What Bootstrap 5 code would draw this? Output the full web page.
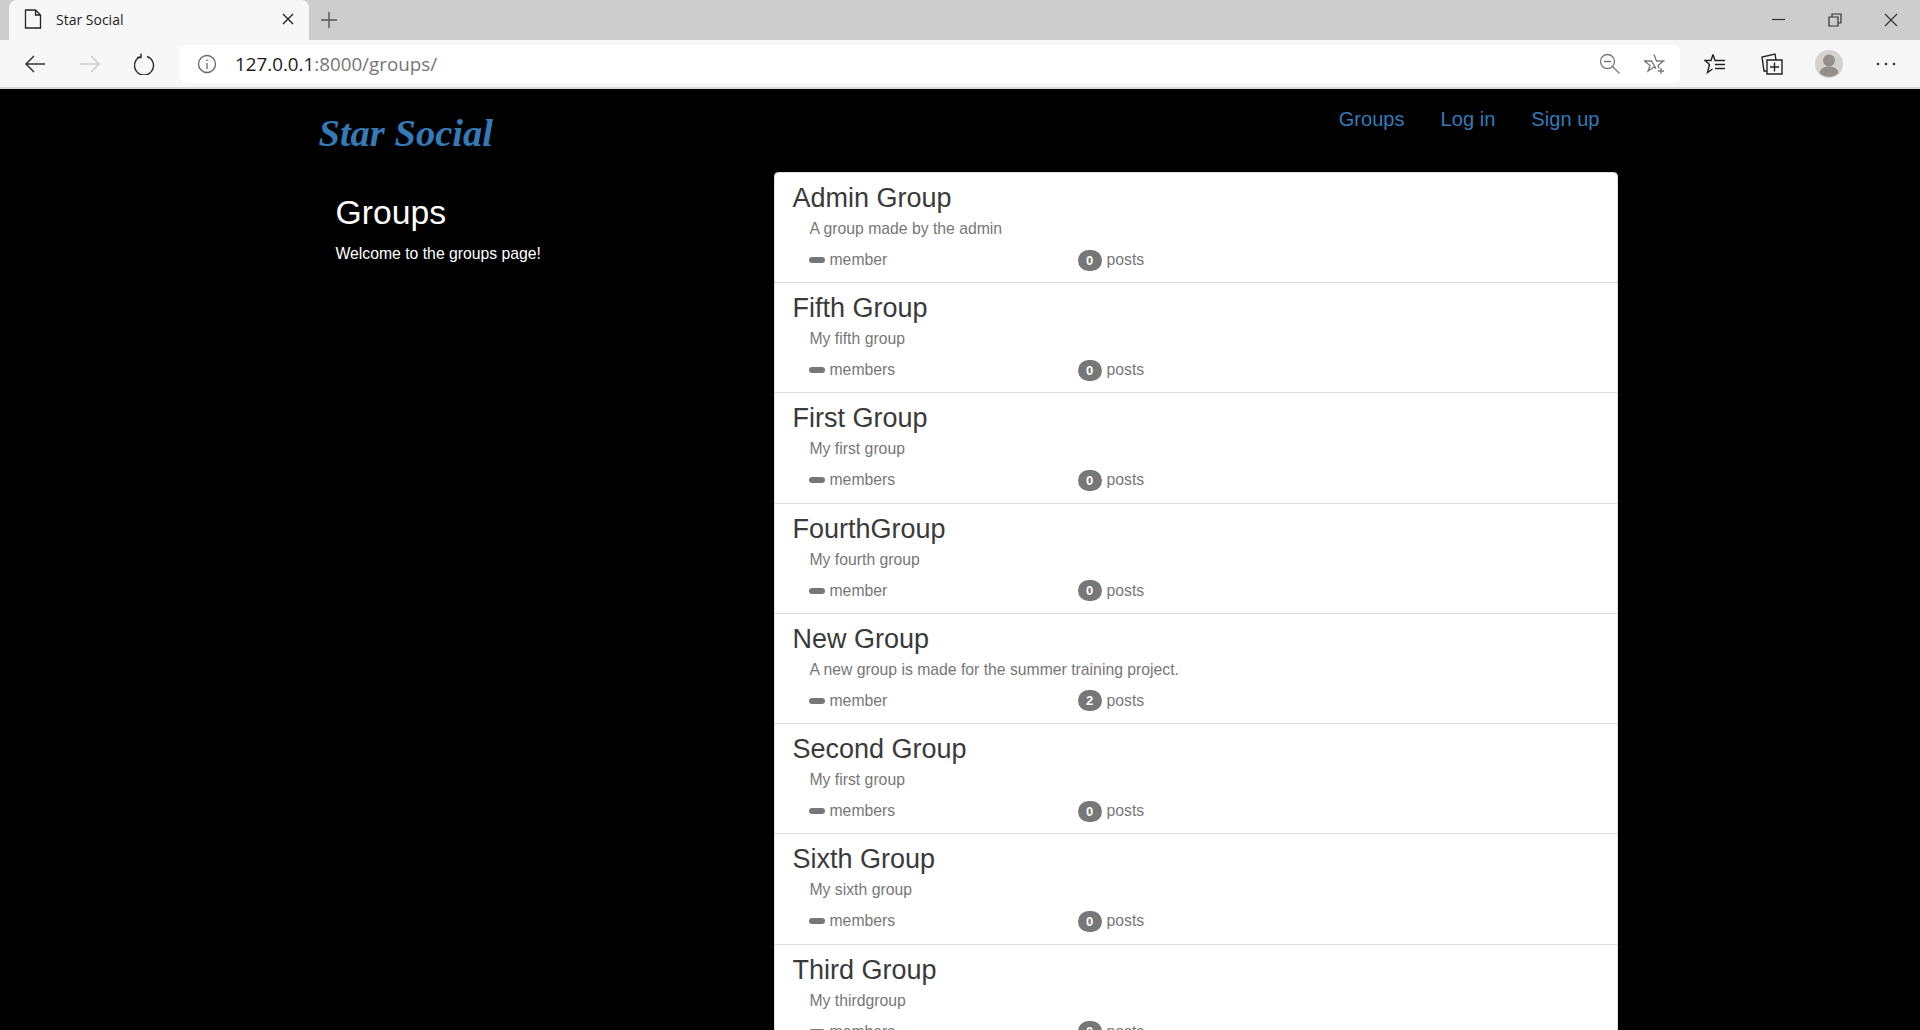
<!DOCTYPE html>
<html lang="en">
<head>
  <meta charset="UTF-8">
  <title>Star Social</title>
  <link rel="stylesheet" href="https://cdn.jsdelivr.net/npm/bootstrap@5.3.0/dist/css/bootstrap.min.css">
  <style>
    html, body {
      height: 1030px;
      overflow: hidden;
    }

    body {
      background: #000;
      font-family: "Liberation Sans", Arial, sans-serif;
    }

    /* browser chrome */
    .tab-strip {
      height: 40px;
      background: #cdcdcd;
      padding-left: 9px;
    }

    .tab-shape {
      width: 300px;
      height: 40px;
      background: #f7f7f7;
      border-radius: 8px 8px 0 0;
      padding: 0 15px 2px;
      font-family: "Open Sans", sans-serif;
      font-size: 14px;
      color: #222;
    }

    .tab-title {
      margin-left: 14px;
    }

    .new-tab {
      margin-left: 11px;
    }

    .win-btns {
      gap: 42px;
      padding-right: 22px;
    }

    .tool-row {
      height: 49px;
      background: #f7f7f7;
      border-bottom: 2px solid #d9d9d9;
      padding: 5px 0 4px 24px;
    }

    .nav-icons {
      gap: 33px;
      width: 156px;
    }

    .url-box {
      width: 1500px;
      height: 38px;
      background: #fff;
      border-radius: 6px;
      padding: 0 14px 0 17px;
      font-family: "Open Sans", sans-serif;
      font-size: 18.8px;
    }

    .url-host {
      margin-left: 18px;
      color: #1a1a1a;
    }

    .url-rest {
      color: #767676;
    }

    .url-end {
      gap: 23px;
    }

    .side-icons {
      padding-left: 6px;
    }

    .side-slot {
      width: 57px;
    }

    /* page */
    .page-wrap {
      width: 1315px;
      margin: 0 auto;
    }

    .top-bar {
      height: 83px;
      padding: 0 18px 0 16px;
    }

    .site-brand {
      font-family: "Liberation Serif", serif;
      font-style: italic;
      font-weight: 700;
      font-size: 38.5px;
      color: #337ab7;
      text-decoration: none;
      margin-top: 16px;
    }

    .top-links {
      gap: 36px;
      padding-top: 15px;
    }

    .top-links a {
      font-size: 20.1px;
      color: #337ab7;
      text-decoration: none;
    }

    .side-col {
      width: 471px;
      padding: 20px 0 0 33px;
      color: #fff;
    }

    .side-col h1 {
      font-size: 33.7px;
      margin-bottom: 10px;
    }

    .side-col p {
      font-size: 15.75px;
    }

    .group-list {
      width: 844px;
      border-radius: 4.4px;
      --bs-list-group-border-color: #ddd;
    }

    .group-row {
      height: 110.3px;
      padding: 7px 18px 0;
      flex-shrink: 0;
    }

    .group-row:first-child {
      height: 111px;
    }

    .group-name {
      font-size: 27px;
      line-height: 36px;
      color: #3a3a3a;
      margin: 0;
    }

    .group-desc {
      font-size: 15.75px;
      line-height: 22px;
      color: #777;
      margin: 2px 0 0 17px;
    }

    .group-meta {
      font-size: 15.75px;
      line-height: 22px;
      color: #777;
      margin: 9px 0 0 17px;
    }

    .meta-left {
      width: 268px;
    }

    .empty-pill {
      width: 16px;
      height: 6px;
      border-radius: 3px;
      background: #777;
      margin: 0 5px 0 -1px;
      display: inline-block;
    }

    .count-pill {
      min-width: 24px;
      height: 21px;
      border-radius: 10.5px;
      background: #777;
      color: #fff;
      font-size: 13px;
      font-weight: 700;
      line-height: 21px;
      text-align: center;
      margin-right: 5px;
      display: inline-block;
    }
  </style>
</head>
<body>
  <!-- browser chrome -->
  <div class="tab-strip d-flex align-items-center justify-content-between">
    <div class="d-flex align-items-center">
      <div class="tab-shape d-flex align-items-center">
        <svg width="18" height="20" viewBox="0 0 18 20" fill="none" stroke="#222" stroke-width="1.3"><path d="M1.5 1h10l5 5v13h-15zM11.500 1v5h5"/></svg>
        <span class="tab-title flex-grow-1">Star Social</span>
        <svg width="12" height="12" viewBox="0 0 12 12" stroke="#222" stroke-width="1.4"><path d="M1 1l10 10M11 1L1 11"/></svg>
      </div>
      <svg class="new-tab" width="18" height="18" viewBox="0 0 18 18" stroke="#555" stroke-width="1.4"><path d="M9 1v16M1 9h16"/></svg>
    </div>
    <div class="win-btns d-flex align-items-center">
      <svg width="14" height="14" viewBox="0 0 14 14" stroke="#333" stroke-width="1.2"><path d="M0 6.500h13"/></svg>
      <svg width="14" height="14" viewBox="0 0 14 14" fill="none" stroke="#333" stroke-width="1.2"><path d="M1 4h9v9H1zM4 4V1h9v9h-3"/></svg>
      <svg width="14" height="14" viewBox="0 0 14 14" stroke="#333" stroke-width="1.2"><path d="M1 1l12 12M13 1L1 13"/></svg>
    </div>
  </div>
  <div class="tool-row d-flex align-items-center">
    <div class="nav-icons d-flex align-items-center">
      <svg width="22" height="20" viewBox="0 0 22 20" fill="none" stroke="#333" stroke-width="1.5"><path d="M21 10H2M10 2l-8 8 8 8"/></svg>
      <svg width="22" height="20" viewBox="0 0 22 20" fill="none" stroke="#ccc" stroke-width="1.5"><path d="M1 10h19M12 2l8 8-8 8"/></svg>
      <svg width="22" height="22" viewBox="0 0 22 22" fill="none" stroke="#333" stroke-width="1.5"><path d="M7 3.500a9.500 9.500 0 1 0 6 0M7 .5v4H3"/></svg>
    </div>
    <div class="url-box d-flex align-items-center">
      <svg width="20" height="20" viewBox="0 0 20 20" fill="none" stroke="#666" stroke-width="1.300"><circle cx="10" cy="10" r="8.500"/><path d="M10 9v6M10 5.500v1.500"/></svg>
      <span class="url-host">127.0.0.1<span class="url-rest">:8000/groups/</span></span>
      <div class="url-end d-flex align-items-center ms-auto">
        <svg width="22" height="22" viewBox="0 0 22 22" fill="none" stroke="#777" stroke-width="1.300"><circle cx="8.500" cy="8.500" r="7"/><path d="M5 8.500h7M13.500 13.500l7 7"/></svg>
        <svg width="22" height="22" viewBox="0 0 22 22" fill="none" stroke="#777" stroke-width="1.300"><path d="M10 1.500l2.500 6.500h7l-5.500 4.500 1 3M12 15.500l-2-1.500-6 4 2-5.500L.5 8h7zM17 15v6M14 18h6"/></svg>
      </div>
    </div>
    <div class="side-icons d-flex align-items-center">
      <div class="side-slot d-flex justify-content-center">
        <svg width="22" height="22" viewBox="0 0 22 22" fill="none" stroke="#222" stroke-width="1.4"><path d="M9 1.500l2 6h10M9 1.500L7 7.500H1l4.500 4-2 8 5-3.500M11 11.500h10M11 15.500h10"/></svg>
      </div>
      <div class="side-slot d-flex justify-content-center">
        <svg width="22" height="22" viewBox="0 0 22 22" fill="none" stroke="#222" stroke-width="1.4"><path d="M6 7h15v14H6zM6 18H3L1 4l13-3 1 6M13.500 9.500v9M9 14h9"/></svg>
      </div>
      <div class="side-slot d-flex justify-content-center">
        <svg width="28" height="28" viewBox="0 0 28 28"><circle cx="14" cy="14" r="14" fill="#d4d2cf"/><circle cx="14" cy="10.500" r="6" fill="#948f8b"/><path d="M4.500 23c1-5 5-6.500 9.500-6.500s8.500 1.500 9.500 6.500a14 14 0 0 1-19 0z" fill="#948f8b"/></svg>
      </div>
      <div class="side-slot d-flex justify-content-center">
        <svg width="22" height="6" viewBox="0 0 22 6" fill="#333"><circle cx="3" cy="3" r="1.300"/><circle cx="11" cy="3" r="1.300"/><circle cx="19" cy="3" r="1.300"/></svg>
      </div>
    </div>
  </div>

  <!-- page -->
  <div class="page-wrap">
    <nav class="top-bar d-flex justify-content-between align-items-start">
      <a class="site-brand" href="#">Star Social</a>
      <div class="top-links d-flex">
        <a href="#">Groups</a>
        <a href="#">Log in</a>
        <a href="#">Sign up</a>
      </div>
    </nav>
    <div class="d-flex">
      <div class="side-col">
        <h1>Groups</h1>
        <p>Welcome to the groups page!</p>
      </div>
      <div class="list-group group-list" id="groupList"></div>
    </div>
  </div>

  <script>
    const groups = [
      ["Admin Group", "A group made by the admin", "member", 0],
      ["Fifth Group", "My fifth group", "members", 0],
      ["First Group", "My first group", "members", 0],
      ["FourthGroup", "My fourth group", "member", 0],
      ["New Group", "A new group is made for the summer training project.", "member", 2],
      ["Second Group", "My first group", "members", 0],
      ["Sixth Group", "My sixth group", "members", 0],
      ["Third Group", "My thirdgroup", "members", 0]
    ];
    document.getElementById("groupList").innerHTML = groups.map(g => `
      <a href="#" class="list-group-item list-group-item-action group-row">
        <h3 class="group-name">${g[0]}</h3>
        <div class="group-desc">${g[1]}</div>
        <div class="group-meta d-flex align-items-center">
          <div class="meta-left d-flex align-items-center"><span class="empty-pill"></span>${g[2]}</div>
          <div class="d-flex align-items-center"><span class="count-pill">${g[3]}</span>posts</div>
        </div>
      </a>`).join("");
  </script>
  <script src="https://cdn.jsdelivr.net/npm/bootstrap@5.3.0/dist/js/bootstrap.bundle.min.js"></script>
</body>
</html>
